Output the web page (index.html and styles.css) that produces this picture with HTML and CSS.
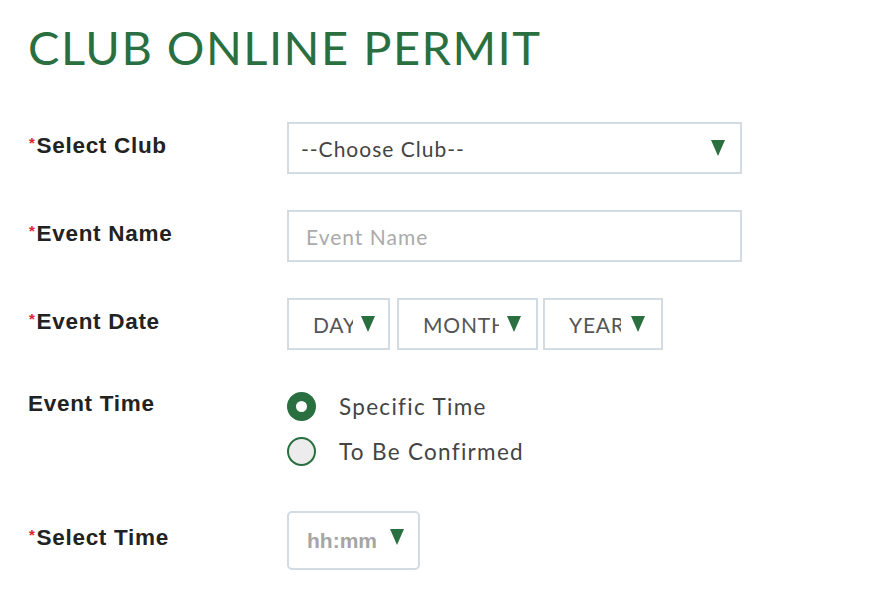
FILE: index.html
```html
<!DOCTYPE html>
<html lang="en">
<head>
	<meta charset="utf-8">
	<title>Club Online Permit</title>
	<link rel="stylesheet" href="styles.css">
</head>
<body>
<h1 class="title">CLUB ONLINE PERMIT</h1>

<form class="permit-form" action="">
	<!-- club -->
	<div class="row row-club">
		<label class="label"><span class="req">*</span>Select Club</label>
		<div class="field select-box wide">
			<span class="select-text">--Choose Club--</span>
			<svg class="arrow" width="14" height="16" viewBox="0 0 14 16"><polygon points="0,0 14,0 7,16" /></svg>
		</div>
	</div>

	<!-- event name -->
	<div class="row">
		<label class="label"><span class="req">*</span>Event Name</label>
		<div class="field wide">
			<span class="placeholder">Event Name</span>
		</div>
	</div>

	<!-- date -->
	<div class="row">
		<label class="label"><span class="req">*</span>Event Date</label>
		<div class="date-group">
			<div class="field date-box day">
				<span class="date-text">DAY</span>
				<svg class="arrow" width="14" height="16" viewBox="0 0 14 16"><polygon points="0,0 14,0 7,16" /></svg>
			</div>
			<div class="field date-box month">
				<span class="date-text">MONTH</span>
				<svg class="arrow" width="14" height="16" viewBox="0 0 14 16"><polygon points="0,0 14,0 7,16" /></svg>
			</div>
			<div class="field date-box year">
				<span class="date-text">YEAR</span>
				<svg class="arrow" width="14" height="16" viewBox="0 0 14 16"><polygon points="0,0 14,0 7,16" /></svg>
			</div>
		</div>
	</div>

	<!-- time type -->
	<div class="row row-radio">
		<label class="label plain">Event Time</label>
		<div class="radio-group">
			<div class="radio-item"><span class="radio checked"></span>Specific Time</div>
			<div class="radio-item"><span class="radio"></span>To Be Confirmed</div>
		</div>
	</div>

	<!-- time -->
	<div class="row row-time">
		<label class="label"><span class="req">*</span>Select Time</label>
		<div class="field time-box">
			<span class="time-text">hh:mm</span>
			<svg class="arrow" width="14" height="16" viewBox="0 0 14 16"><polygon points="0,0 14,0 7,16" /></svg>
		</div>
	</div>
</form>
</html>
```

FILE: styles.css
```css
html {
	background: #fff;
}
body {
	margin: 0;
	padding: 0 0 0 28px;
	color: #444;
	font-family: Lato, "Open Sans", sans-serif;
}
.title {
	margin: 0;
	padding-top: 22px;
	height: 122px;
	box-sizing: border-box;
	font-family: Lato, sans-serif;
	font-weight: 400;
	font-size: 47px;
	line-height: 50px;
	letter-spacing: 1.5px;
	color: #2a6f3f;
}
.row
{
display:flex;
align-items:center;
margin-bottom:36px;
}
.label
{
width:259px;
flex:none;
font-family:"Liberation Sans", Arial, sans-serif;
font-weight:bold;
font-size:22.5px;
letter-spacing:0.7px;
color:#222;
margin-top:-5px;
}
.req
{
color:#e0202a;
font-size:15px;
vertical-align:5px;
margin-left:1px;
margin-right:1px;
}
.field
{
box-sizing:border-box;
height:52px;
border:2px solid #d3dbe2;
display:flex;
align-items:center;
background:#fff;
}
.wide
{
width:455px;
}
.select-box
{
padding:0 15px 0 12px;
justify-content:space-between;
}
.select-text
{
font-size:21px;
letter-spacing:1px;
color:#444;
}
.placeholder
{
font-size:21px;
letter-spacing:1px;
color:#aaa;
padding-left:17px;
}
.arrow
{
fill:#2a6f3f;
flex:none;
}
.date-group
{
display:flex;
gap:7px;
}
.date-box
{
padding-left:24px;
}
.date-box.day {width:103px;}
.date-box.month {width:141px;}
.date-box.year {width:120px; margin-left:-2px;}
.date-text
{
font-size:21px;
letter-spacing:0.8px;
color:#555;
overflow:hidden;
white-space:nowrap;
margin-right:8px;
}
.day .date-text {width:40px;}
.month .date-text {width:76px;}
.year .date-text {width:52px; margin-right:10px;}
.row-radio
{
align-items:flex-start;
margin-bottom:46px;
}
.row-radio .label
{
margin-top:5px;
}
.radio-group
{
display:flex;
flex-direction:column;
gap:17px;
margin-top:6px;
}
.radio-item
{
display:flex;
align-items:center;
font-size:22.5px;
letter-spacing:1.3px;
color:#444;
height:28px;
}
.radio
{
box-sizing:border-box;
width:29px;
height:29px;
border-radius:50%;
border:2px solid #2a6f3f;
background:#ececec;
margin-right:23px;
margin-left:0;
}
.radio.checked
{
border:9px solid #2a6f3f;
background:#fff;
}
.time-box
{
width:133px;
height:59px;
border-radius:5px;
padding:0 14px 0 18px;
justify-content:space-between;
}
.time-text
{
font-family:"Liberation Sans", Arial, sans-serif;
font-weight:bold;
font-size:21px;
color:#a5a5a5;
}
.time-box .arrow
{
margin-top:-8px;
}
```
